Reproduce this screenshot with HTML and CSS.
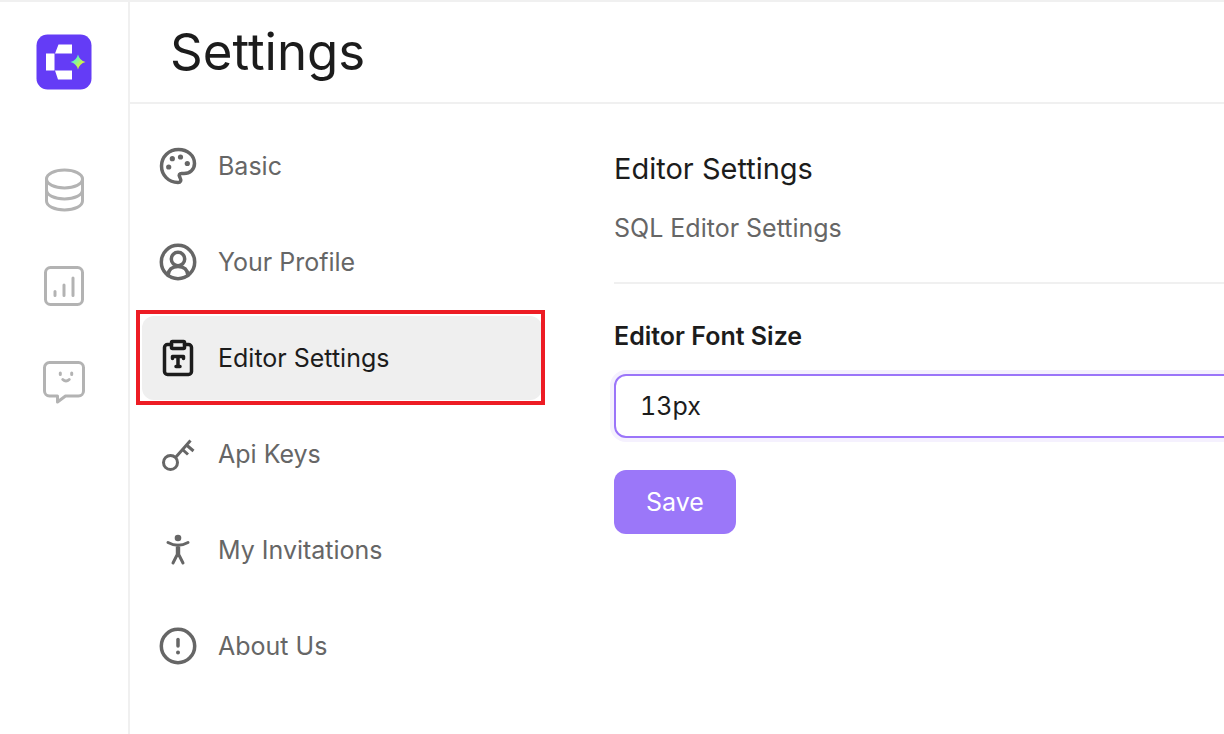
FILE: index.html
```
<!DOCTYPE html>
<html lang="en">
<head>
<meta charset="utf-8">
<title>Settings</title>
<link rel="stylesheet" href="styles.css">
</head>
<body>
<div class="app">
  <nav class="rail" aria-label="Main">
    <a class="logo" href="#" aria-label="Home">
      <svg width="56" height="56" viewBox="0 0 56 56">
        <defs><linearGradient id="spark" x1="0" y1="0" x2="1" y2="1"><stop offset=".3" stop-color="#62f5c0"/><stop offset=".75" stop-color="#e5f52c"/></linearGradient></defs>
        <rect x=".5" y=".5" width="55" height="55" rx="11" fill="#643cf6"/>
        <path fill="#fff" d="M10 19.500h8.500v17H10zM22.500 10.500H36v9H19zM19 36.500H36v9H22z"/>
        <path fill="url(#spark)" d="M42 20.500Q43.500 26.500 49.500 28Q43.500 29.500 42 35.500Q40.500 29.500 34.500 28Q40.500 26.500 42 20.500Z"/>
      </svg>
    </a>
    <a class="rail-link" href="#" aria-label="Databases">
      <svg width="48" height="48" viewBox="0 0 48 48">
        <ellipse cx="24.500" cy="13" rx="18" ry="9"/>
        <path d="M6.500 13v22c0 5 8 9 18 9s18-4 18-9V13M6.500 24c0 5 8 9 18 9s18-4 18-9"/>
      </svg>
    </a>
    <a class="rail-link" href="#" aria-label="Dashboards">
      <svg width="48" height="48" viewBox="0 0 48 48">
        <rect x="5.500" y="5.500" width="37" height="37" rx="5"/>
        <path d="M15 29.500v4M24 23v10.500M33 16v17.500"/>
      </svg>
    </a>
    <a class="rail-link" href="#" aria-label="Chat">
      <svg width="48" height="48" viewBox="0 0 48 48">
        <path d="M9.500 4.500h29a5 5 0 0 1 5 5V33a5 5 0 0 1-5 5H25.500L17.500 44V38h-8a5 5 0 0 1-5-5V9.500a5 5 0 0 1 5-5zM20.300 15v1.500M31.700 15v1.500M22.800 21.500q3.200 3 6.400 0"/>
      </svg>
    </a>
  </nav>
  <div class="page">
    <header class="header"><h1 class="title">Settings</h1></header>
    <div class="body">
      <nav class="menu" aria-label="Settings">
        <a class="item" href="#">
          <svg class="icon" width="40" height="40" viewBox="0 0 40 40">
            <path d="M20 36.500C10.500 36.500 3.500 29 3.500 20C3.500 10.500 11 3.500 20.500 3.500C29.500 3.500 36.500 9.500 36.500 17.500C36.500 23.500 32 27.500 26 27.500H23.500C21.500 27.500 20.700 29.200 21.500 30.500L22.200 32C23.500 34.500 22.500 36.500 20 36.500Z"/>
            <g class="solid"><circle cx="10.700" cy="21" r="2.600"/><circle cx="14.300" cy="12.700" r="2.600"/><circle cx="22.500" cy="11" r="2.600"/><circle cx="29.300" cy="17.500" r="2.600"/></g>
          </svg>Basic</a>
        <a class="item" href="#">
          <svg class="icon" width="40" height="40" viewBox="0 0 40 40">
            <circle cx="20" cy="20" r="16.700"/><circle cx="20" cy="17" r="6.700"/><path d="M10 33.500C10.500 27 14.500 24.500 20 24.500S29.500 27 30 33.500"/>
          </svg>Your Profile</a>
        <a class="item item-active" href="#" aria-current="page">
          <svg class="icon" width="40" height="40" viewBox="0 0 40 40">
            <path d="M13.500 6.500H9.500a3 3 0 0 0-3 3V33.500a3 3 0 0 0 3 3h21a3 3 0 0 0 3-3V9.500a3 3 0 0 0-3-3H26.500"/>
            <rect x="13.500" y="3.500" width="13" height="7" rx="1"/>
            <path d="M14.500 20.500v-2h11v2M20 18.500v10M18 28.500h4"/>
          </svg>Editor Settings</a>
        <a class="item" href="#">
          <svg class="icon icon-thin" width="40" height="40" viewBox="0 0 40 40">
            <circle cx="12.500" cy="28.500" r="7"/><path d="M17.500 23.500L32.500 6.500M28.500 11L35.500 17M24.500 15.500L30 20.500"/>
          </svg>Api Keys</a>
        <a class="item" href="#">
          <svg class="icon icon-thin icon-round" width="40" height="40" viewBox="0 0 40 40">
            <circle class="solid" cx="20" cy="8" r="3.300"/><path d="M10 12.500Q20 18 30 12.500M20 15v8M15 33L19.300 24.500V16M25 33L20.700 24.500V16"/>
          </svg>My Invitations</a>
        <a class="item" href="#">
          <svg class="icon" width="40" height="40" viewBox="0 0 40 40">
            <circle cx="20" cy="20" r="16.700"/><path d="M20 13.500v6.500"/><circle class="solid" cx="20" cy="26.500" r="2"/>
          </svg>About Us</a>
      </nav>
      <main class="content">
        <h2 class="heading">Editor Settings</h2>
        <p class="subtitle">SQL Editor Settings</p>
        <form class="form">
          <label class="label" for="font-size">Editor Font Size</label>
          <input class="field" id="font-size" type="text" value="13px">
          <button class="save" type="button">Save</button>
        </form>
      </main>
    </div>
  </div>
</div>
</body>
</html>
```
FILE: styles.css
```
* { box-sizing: border-box; }
body {
  margin: 0;
  background: #fff;
  color: #1c1c1c;
  font-family: Inter, "Liberation Sans", sans-serif;
  font-size: 25px;
  line-height: 36px;
}
h1, h2, p { margin: 0; font-weight: 400; }
a { color: inherit; text-decoration: none; }
svg { display: block; flex: none; }

.app {
  display: flex;
  min-height: 100vh;
  border-top: 2px solid #f0f0f0;
  overflow: hidden;
}
.rail {
  flex: none;
  width: 130px;
  padding: 32px 0;
  border-right: 2px solid #f0f0f0;
  display: flex;
  flex-direction: column;
  align-items: center;
  gap: 48px;
}
.logo { margin-bottom: 28px; }
.rail-link svg {
  fill: none;
  stroke: #b3b3b3;
  stroke-width: 3;
  stroke-linecap: round;
  stroke-linejoin: round;
}
.page { flex: 1; min-width: 0; }
.header {
  padding: 16px 40px;
  border-bottom: 2px solid #f0f0f0;
}
.title { font-size: 51px; line-height: 68px; }
.body { display: flex; }

.menu {
  flex: none;
  width: 424px;
  padding: 20px 12px;
  display: flex;
  flex-direction: column;
  gap: 12px;
}
.item {
  position: relative;
  display: flex;
  align-items: center;
  gap: 20px;
  padding: 22px 16px;
  border-radius: 12px;
  color: #666;
}
.item-active { background: #efefef; color: #1c1c1c; }
.item-active::after {
  content: "";
  position: absolute;
  inset: -6px -3px -5px -6px;
  border: 4px solid #ed1c24;
}
.icon {
  fill: none;
  stroke: currentColor;
  stroke-width: 3.500;
  stroke-linecap: round;
  stroke-linejoin: round;
}
.icon-thin { stroke-width: 3; stroke-linecap: butt; }
.icon-round { stroke-linecap: round; }
.solid { fill: currentColor; stroke: none; }

.content { flex: 1; min-width: 0; padding: 44px 0 40px 60px; }
.heading { font-size: 29px; line-height: 42px; }
.subtitle {
  margin-top: 20px;
  padding-bottom: 36px;
  border-bottom: 2px solid #f0f0f0;
  color: #666;
}
.form {
  display: flex;
  flex-direction: column;
  align-items: flex-start;
  margin-top: 34px;
}
.label { font-weight: 600; }
.field {
  width: calc(100% + 24px);
  height: 64px;
  margin: 20px 0 32px;
  padding: 0 24px;
  border: 2px solid #9b75f9;
  border-radius: 12px;
  outline: none;
  box-shadow: 0 0 0 4px #f5f1fe;
  background: #fff;
  color: inherit;
  font: inherit;
  font-variant-numeric: tabular-nums;
}
.save {
  padding: 14px 32px;
  border: 0;
  border-radius: 12px;
  background: #9b77f9;
  color: #fff;
  font: inherit;
}
```
